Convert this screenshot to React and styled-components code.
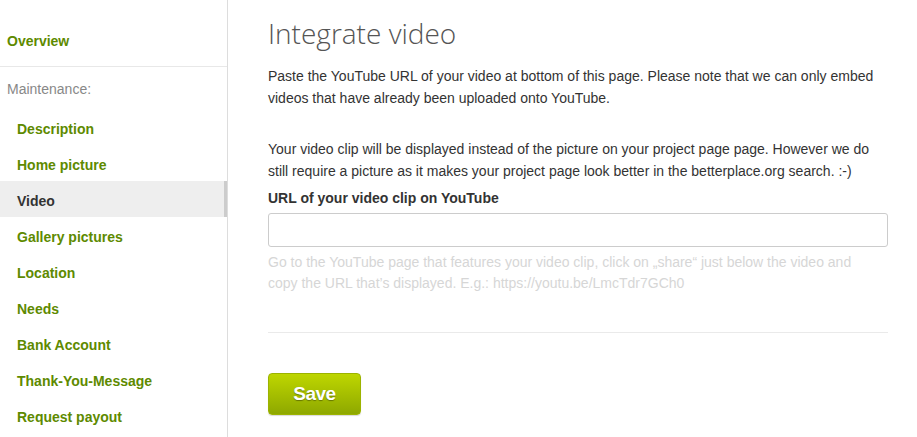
import React from 'react';
import styled, { createGlobalStyle } from 'styled-components';

const GlobalStyle = createGlobalStyle`
  html, body {
    margin: 0;
    padding: 0;
    background: #fff;
  }
  body {
    font-family: 'Liberation Sans', Arial, sans-serif;
    font-size: 14px;
    color: #333;
  }
`;

const Page = styled.div`
  display: flex;
  width: 917px;
  height: 437px;
  overflow: hidden;
`;

const Sidebar = styled.nav`
  width: 227px;
  flex-shrink: 0;
  border-right: 1px solid #ddd;
  padding-top: 21px;
`;

const TopLink = styled.a`
  display: flex;
  align-items: center;
  box-sizing: border-box;
  height: 36px;
  padding: 4px 7px 0;
  font-weight: bold;
  color: #5e8a00;
  text-decoration: none;
`;

const Separator = styled.div`
  margin-top: 9px;
  border-top: 1px solid #e8e8e8;
`;

const SectionLabel = styled.div`
  box-sizing: border-box;
  height: 42px;
  display: flex;
  align-items: center;
  padding: 2px 0 0 7px;
  color: #888;
`;

const NavItem = styled.a`
  display: flex;
  align-items: center;
  box-sizing: border-box;
  height: 36px;
  padding: 4px 0 0 17px;
  font-weight: bold;
  text-decoration: none;
  color: ${(p) => (p.$active ? '#333' : '#5e8a00')};
  background: ${(p) => (p.$active ? '#eeeeee' : 'transparent')};
  border-right: 3px solid ${(p) => (p.$active ? '#cccccc' : 'transparent')};
`;

const Main = styled.main`
  flex: 1;
  padding: 0 29px 0 40px;
`;

const Title = styled.h1`
  margin: 14px 0 0;
  font-family: 'Open Sans', sans-serif;
  font-weight: 300;
  font-size: 28px;
  line-height: 38px;
  color: #555;
`;

const Text = styled.p`
  margin: ${(p) => (p.$first ? '13px' : '29px')} 0 0;
  line-height: 22px;
  color: #333;
`;

const Field = styled.div`
  margin-top: 5px;
`;

const Label = styled.label`
  display: block;
  font-weight: bold;
  line-height: 22px;
  color: #333;
`;

const Input = styled.input`
  display: block;
  box-sizing: border-box;
  width: 100%;
  height: 34px;
  margin-top: 4px;
  border: 1px solid #ccc;
  border-radius: 3px;
  font: inherit;
  padding: 0 8px;
`;

const Hint = styled.p`
  margin: 5px 0 0;
  max-width: 600px;
  line-height: 21px;
  color: #d6d6d6;
`;

const Divider = styled.hr`
  margin: 38px 0 0;
  border: 0;
  border-top: 1px solid #eaeaea;
`;

const SaveButton = styled.button`
  margin-top: 40px;
  width: 93px;
  height: 42px;
  border: 1px solid #9cb300;
  border-radius: 4px;
  background: linear-gradient(#bed600, #8ea800);
  color: #fff;
  font-family: 'Liberation Sans', Arial, sans-serif;
  font-weight: bold;
  font-size: 19px;
  letter-spacing: -0.5px;
  text-shadow: 0 1px 1px rgba(0, 0, 0, 0.35);
  box-shadow: 0 1px 1px rgba(0, 0, 0, 0.15);
  cursor: pointer;
`;

const items = [
  'Description',
  'Home picture',
  'Video',
  'Gallery pictures',
  'Location',
  'Needs',
  'Bank Account',
  'Thank-You-Message',
  'Request payout',
];

export default function App() {
  return (
    <>
      <GlobalStyle />
      <Page>
        <Sidebar>
          <TopLink href="#">Overview</TopLink>
          <Separator />
          <SectionLabel>Maintenance:</SectionLabel>
          {items.map((item) => (
            <NavItem key={item} href="#" $active={item === 'Video'}>
              {item}
            </NavItem>
          ))}
        </Sidebar>
        <Main>
          <Title>Integrate video</Title>
          <Text $first>
            Paste the YouTube URL of your video at bottom of this page. Please note that we can only
            embed videos that have already been uploaded onto YouTube.
          </Text>
          <Text>
            Your video clip will be displayed instead of the picture on your project page page.
            However we do still require a picture as it makes your project page look better in the
            betterplace.org search. :-)
          </Text>
          <Field>
            <Label htmlFor="video-url">URL of your video clip on YouTube</Label>
            <Input id="video-url" type="text" />
            <Hint>
              Go to the YouTube page that features your video clip, click on „share“ just below the
              video and copy the URL that’s displayed. E.g.: https://youtu.be/LmcTdr7GCh0
            </Hint>
          </Field>
          <Divider />
          <SaveButton>Save</SaveButton>
        </Main>
      </Page>
    </>
  );
}
